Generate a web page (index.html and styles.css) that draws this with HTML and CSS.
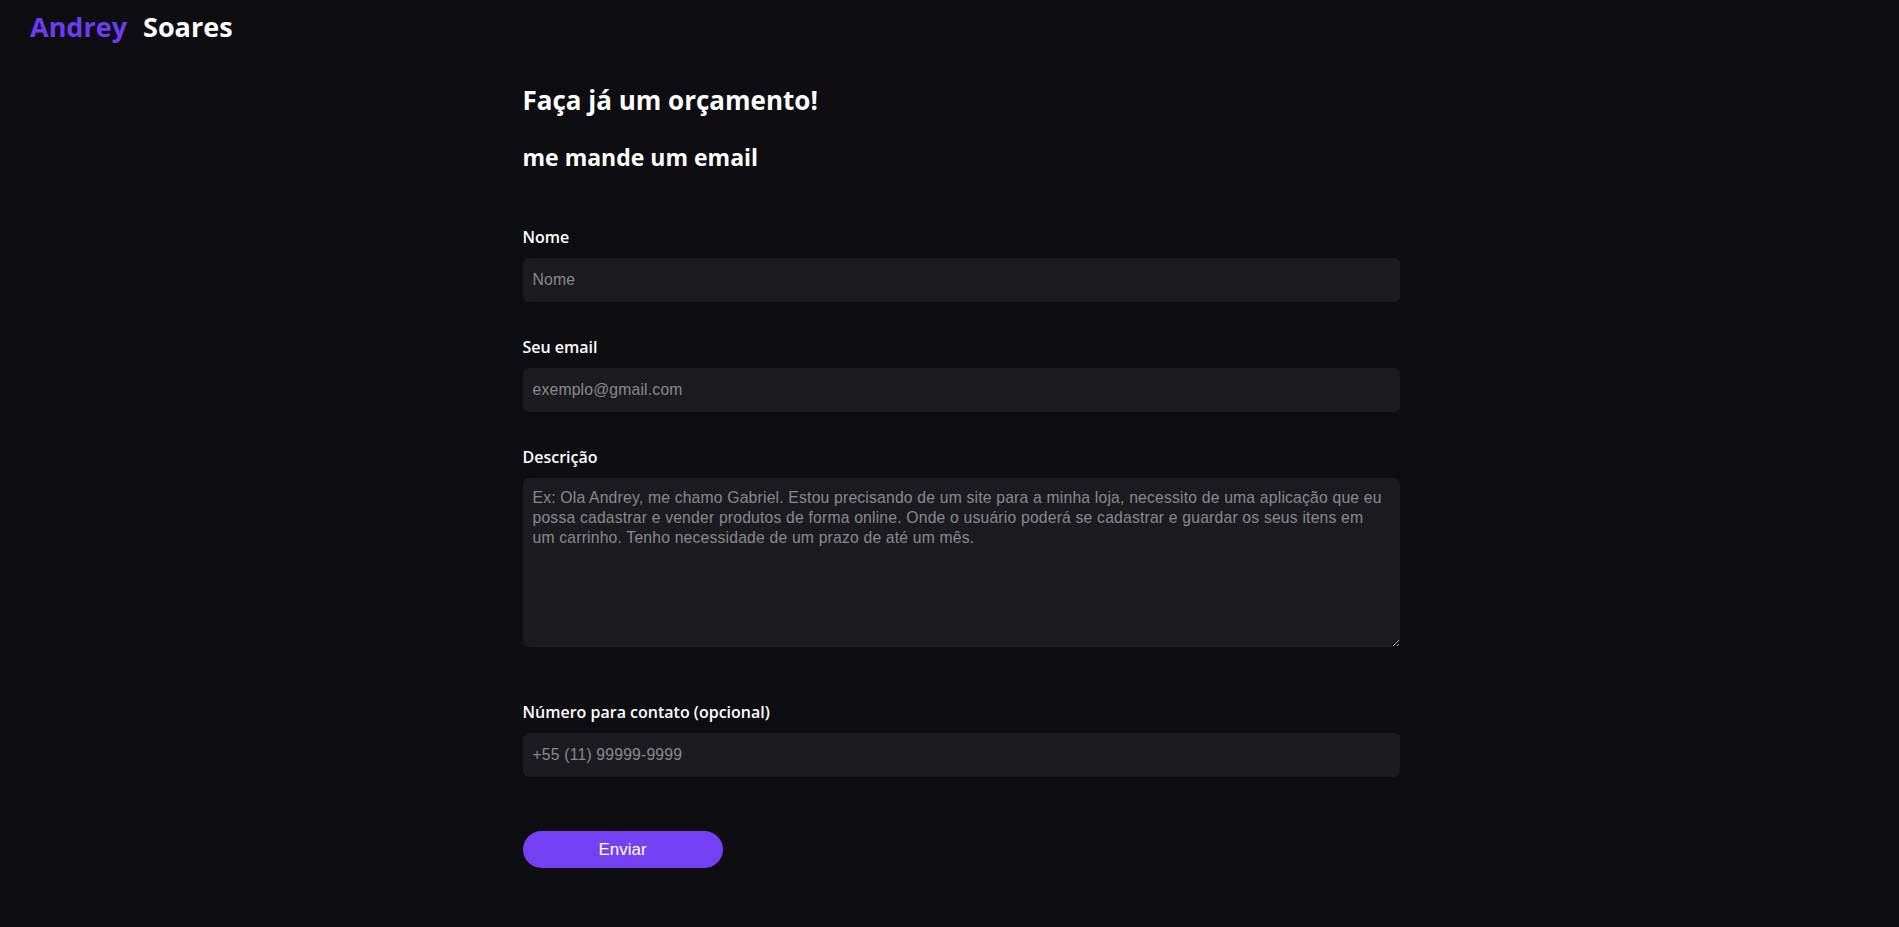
FILE: index.html
```html
<!DOCTYPE html>
<html>
<head>
    <meta charset="UTF-8">
    <title>Andrey Soares - Orçamento</title>
    <link rel="stylesheet" href="styles.css">
</head>
<body>
    <header class="topo">
        <a href="#" class="logo"><span class="logo-nome">Andrey</span><span class="logo-sobrenome">Soares</span></a>
    </header>

    <main class="orcamento">
        <h1>Faça já um orçamento!</h1>
        <h2>me mande um email</h2>

        <form class="formulario">
            <div class="campo">
                <label for="nome">Nome</label>
                <input type="text" id="nome" placeholder="Nome">
            </div>
            <div class="campo">
                <label for="email">Seu email</label>
                <input type="email" id="email" placeholder="exemplo@gmail.com">
            </div>
            <div class="campo campo-descricao">
                <label for="descricao">Descrição</label>
                <textarea id="descricao" placeholder="Ex: Ola Andrey, me chamo Gabriel. Estou precisando de um site para a minha loja, necessito de uma aplicação que eu possa cadastrar e vender produtos de forma online. Onde o usuário poderá se cadastrar e guardar os seus itens em um carrinho. Tenho necessidade de um prazo de até um mês."></textarea>
            </div>
            <div class="campo">
                <label for="telefone">Número para contato (opcional)</label>
                <input type="tel" id="telefone" placeholder="+55 (11) 99999-9999">
            </div>
            <button type="submit" class="botao">Enviar</button>
        </form>
    </main>
</body>
</html>
```

FILE: styles.css
```css
* {
    box-sizing: border-box;
}
body {
    margin: 0;
    padding: 0;
    background-color: #0e0d12;
    color: #fff;
    font-family: "Open Sans", Arial, sans-serif;
}
.topo {
    padding: 7px 30px;
    height: 54px;
}
.logo {
    text-decoration: none;
    font-size: 27px;
    font-weight: 700;
    line-height: 40px;
}
.logo-nome {
    color: #6c3cf2;
    margin-right: 16px;
}
.logo-sobrenome {
    color: #fff;
}
.orcamento {
    width: 900px;
    margin: 0 auto;
    padding: 28px 0 40px 23px;
}
h1 {
    font-size: 26px;
    font-weight: 700;
    margin: 0 0 23px 0;
}
h2 {
    font-size: 23px;
    font-weight: 700;
    margin: 0 0 53px 0;
}
.campo {
    display: flex;
    flex-direction: column;
    margin-bottom: 34px;
}
.campo-descricao {
    margin-bottom: 54px;
}
label {
    font-size: 16px;
    font-weight: 600;
    margin-bottom: 10px;
}
input, textarea {
    width: 100%;
    background-color: #1c1b20;
    border: none;
    border-radius: 6px;
    color: #ccc;
    font-family: Arial, "Liberation Sans", sans-serif;
    font-size: 15.7px;
    letter-spacing: 0.2px;
    outline: none;
}
input {
    height: 44px;
    padding: 0 10px;
}
textarea {
    height: 169px;
    padding: 10px;
    line-height: 20px;
    resize: vertical;
}
input::placeholder, textarea::placeholder {
    color: #8a8a8d;
}
.botao {
    width: 200px;
    height: 37px;
    margin-top: 20px;
    border: none;
    border-radius: 20px;
    background-color: #7540f4;
    color: #fff;
    font-family: Arial, "Liberation Sans", sans-serif;
    font-size: 17px;
    cursor: pointer;
}
```
